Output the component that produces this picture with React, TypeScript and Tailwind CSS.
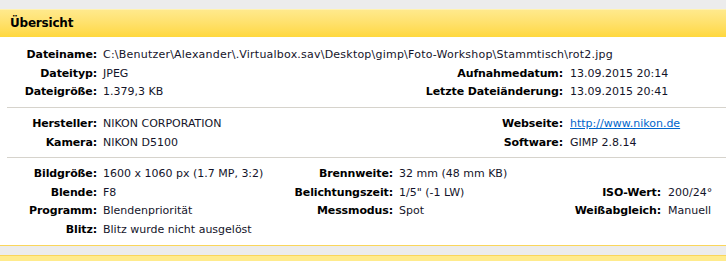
import React from "react";

const font = { fontFamily: '"DejaVu Sans", Verdana, sans-serif' };

function L({ children, w }: { children?: React.ReactNode; w: string }) {
  return (
    <div className={`${w} shrink-0 text-right font-bold text-black tracking-[-0.12px] whitespace-nowrap`}>
      {children}
    </div>
  );
}

function V({ children, w, ml, t }: { children?: React.ReactNode; w?: string; ml: string; t?: string }) {
  return (
    <div className={`${ml} ${w ?? ""} ${t ?? ""} shrink-0 text-[#14142a] whitespace-nowrap`}>
      {children}
    </div>
  );
}

function Sep() {
  return <div className="ml-[7px] h-px shrink-0 bg-[#d6d3cc]" />;
}

export default function App() {
  return (
    <div
      className="w-[726px] h-[261px] bg-[#ececec] pt-[9px] flex flex-col overflow-hidden text-[11px] leading-[18.5px]"
      style={font}
    >
      <div className="h-[28px] shrink-0 border-t border-[#fff2b0] bg-gradient-to-b from-[#ffe98c] to-[#ffd83c] flex items-center pl-[10px]">
        <span className="font-bold text-[12px] text-black tracking-[-0.2px]">Übersicht</span>
      </div>
      <div className="bg-white flex flex-col h-[208px] shrink-0">
        <div className="pt-[9px] pb-[5.5px]">
          <div className="flex">
            <L w="w-[97px]">Dateiname:</L>
            <V ml="ml-[6px]" t="tracking-[0.22px]">C:\Benutzer\Alexander\.Virtualbox.sav\Desktop\gimp\Foto-Workshop\Stammtisch\rot2.jpg</V>
          </div>
          <div className="flex">
            <L w="w-[97px]">Dateityp:</L>
            <V ml="ml-[6px]" w="w-[260px]">JPEG</V>
            <L w="w-[200px]">Aufnahmedatum:</L>
            <V ml="ml-[7px]">13.09.2015 20:14</V>
          </div>
          <div className="flex">
            <L w="w-[97px]">Dateigröße:</L>
            <V ml="ml-[6px]" w="w-[260px]">1.379,3 KB</V>
            <L w="w-[200px]">Letzte Dateiänderung:</L>
            <V ml="ml-[7px]">13.09.2015 20:41</V>
          </div>
        </div>
        <Sep />
        <div className="pt-[7px] pb-[5px]">
          <div className="flex">
            <L w="w-[97px]">Hersteller:</L>
            <V ml="ml-[6px]" w="w-[260px]">NIKON CORPORATION</V>
            <L w="w-[200px]">Webseite:</L>
            <V ml="ml-[7px]">
              <span className="text-[#0066cc] underline">http://www.nikon.de</span>
            </V>
          </div>
          <div className="flex">
            <L w="w-[97px]">Kamera:</L>
            <V ml="ml-[6px]" w="w-[260px]">NIKON D5100</V>
            <L w="w-[200px]">Software:</L>
            <V ml="ml-[7px]">GIMP 2.8.14</V>
          </div>
        </div>
        <Sep />
        <div className="pt-[7px]">
          <div className="flex">
            <L w="w-[97px]">Bildgröße:</L>
            <V ml="ml-[6px]" w="w-[190px]">1600 x 1060 px (1.7 MP, 3:2)</V>
            <L w="w-[100px]">Brennweite:</L>
            <V ml="ml-[6px]" w="w-[162px]">32 mm (48 mm KB)</V>
          </div>
          <div className="flex">
            <L w="w-[97px]">Blende:</L>
            <V ml="ml-[6px]" w="w-[190px]">F8</V>
            <L w="w-[100px]">Belichtungszeit:</L>
            <V ml="ml-[6px]" w="w-[162px]">1/5" (-1 LW)</V>
            <L w="w-[100px]">ISO-Wert:</L>
            <V ml="ml-[7px]">200/24°</V>
          </div>
          <div className="flex">
            <L w="w-[97px]">Programm:</L>
            <V ml="ml-[6px]" w="w-[190px]">Blendenpriorität</V>
            <L w="w-[100px]">Messmodus:</L>
            <V ml="ml-[6px]" w="w-[162px]">Spot</V>
            <L w="w-[100px]">Weißabgleich:</L>
            <V ml="ml-[7px]">Manuell</V>
          </div>
          <div className="flex">
            <L w="w-[97px]">Blitz:</L>
            <V ml="ml-[6px]">Blitz wurde nicht ausgelöst</V>
          </div>
        </div>
      </div>
      <div className="h-px shrink-0 bg-[#fad65a]" />
      <div className="h-[9px] shrink-0 bg-[#ececec]" />
      <div className="h-px shrink-0 bg-[#fad65a]" />
      <div className="flex-1 bg-[#ffeb8c]" />
    </div>
  );
}
